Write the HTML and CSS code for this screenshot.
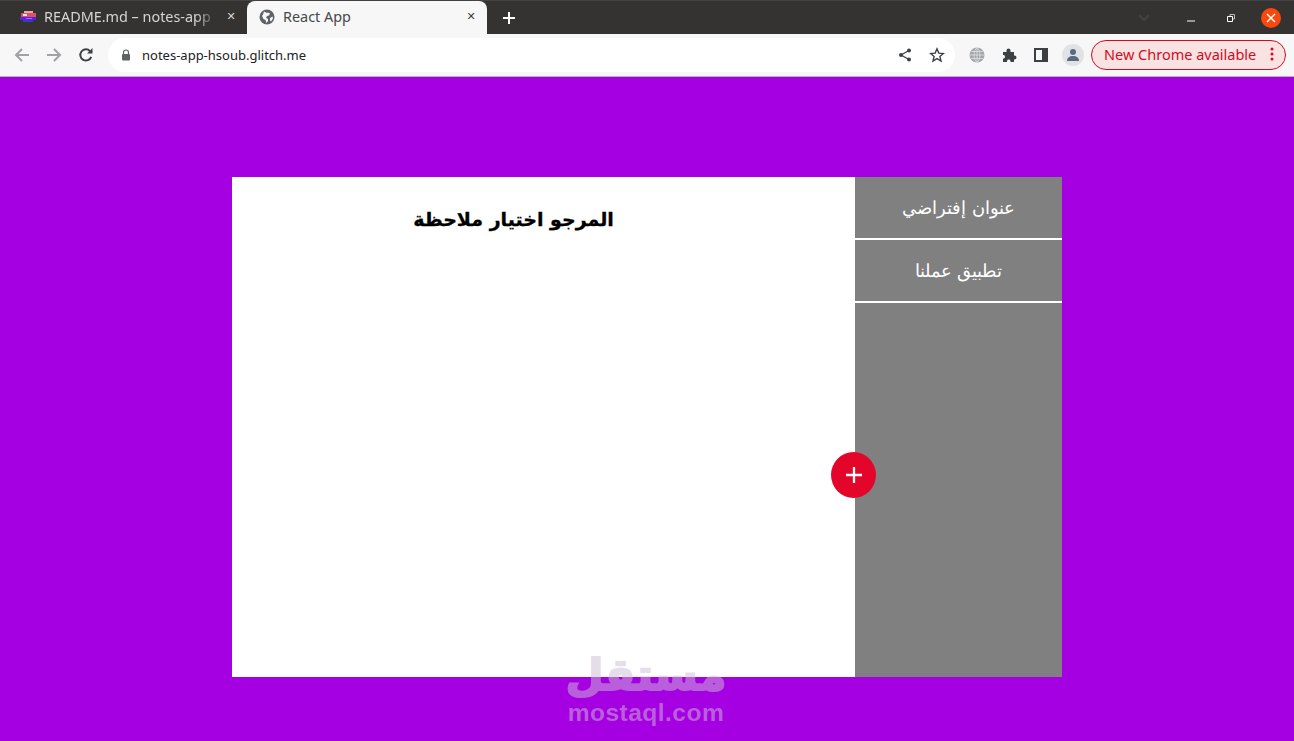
FILE: index.html
```html
<!DOCTYPE html>
<html lang="ar">
<head>
  <meta charset="UTF-8">
  <title>React App</title>
  <link rel="stylesheet" href="styles.css">
</head>
<body>
  <div class="tabbar">
    <div class="tab">
      <svg class="favicon" viewBox="0 0 16 16" width="16" height="16">
        <rect x="1" y="4" width="15" height="4" fill="#d9506a"/>
        <rect x="4" y="2" width="9" height="2" fill="#e8a9a0"/>
        <rect x="0" y="8" width="16" height="3" fill="#5a22e0"/>
        <rect x="3" y="11" width="10" height="2" fill="#3f35c8"/>
        <rect x="6" y="9" width="6" height="1" fill="#a070f0"/>
        <rect x="3" y="5" width="4" height="2" fill="#f3e6e6"/>
      </svg>
      <span class="tab-title fade">README.md – notes-app</span>
      <span class="tab-close">✕</span>
    </div>
    <div class="tab active">
      <svg class="favicon" viewBox="0 0 16 16" width="16" height="16">
        <circle cx="8" cy="8" r="7.500" fill="#5f6368"/>
        <path d="M5 2.500l3 1.500 1-.5 2 1-1 2-2 .5-1 2 2 1v2l-1.500 2-1-3-2-1-1.500-3 1-1.500z M11 9l2.500-1.500.5 2-2 3-1-1z" fill="#f7f7f7"/>
      </svg>
      <span class="tab-title">React App</span>
      <span class="tab-close">✕</span>
    </div>
    <svg class="new-tab" viewBox="0 0 14 14" width="14" height="14"><path d="M7 1v12M1 7h12" stroke="#fff" stroke-width="2"/></svg>
    <svg class="tab-search" viewBox="0 0 12 8" width="12" height="8"><path d="M1 1l5 5 5-5" fill="none" stroke="#45433f" stroke-width="2"/></svg>
    <div class="win-controls">
      <svg viewBox="0 0 10 10" width="10" height="10"><path d="M1 8h8" stroke="#fff" stroke-width="1"/></svg>
      <svg viewBox="0 0 10 10" width="10" height="10"><path d="M1.500 3.500h5v5h-5z" fill="none" stroke="#fff"/><path d="M4 3V1.500h4.500V6H7" fill="none" stroke="#bbb"/></svg>
      <span class="win-close">
        <svg viewBox="0 0 10 10" width="10" height="10"><path d="M1 1l8 8M9 1l-8 8" stroke="#fff" stroke-width="1.400"/></svg>
      </span>
    </div>
  </div>

  <div class="toolbar">
    <div class="nav-icons">
      <svg viewBox="0 0 16 16" width="16" height="16"><path d="M15 8H2M8 2L2 8l6 6" fill="none" stroke="#a0a2a5" stroke-width="2"/></svg>
      <svg viewBox="0 0 16 16" width="16" height="16"><path d="M1 8h13M8 2l6 6-6 6" fill="none" stroke="#a0a2a5" stroke-width="2"/></svg>
      <svg viewBox="0 0 16 16" width="16" height="16"><path d="M13.200 9.800A5.600 5.600 0 1 1 12 4.100" fill="none" stroke="#3c4043" stroke-width="2"/><path d="M9 6.500h5.500V1z" fill="#3c4043"/></svg>
    </div>
    <div class="omnibox">
      <svg viewBox="0 0 10 12" width="10" height="12"><path d="M2.500 5V3.500a2.500 2.500 0 0 1 5 0V5" fill="none" stroke="#5f6368" stroke-width="1.200"/><rect x="1" y="5" width="8" height="6.500" rx="1" fill="#5f6368"/></svg>
      <span class="url">notes-app-hsoub.glitch.me</span>
      <div class="omni-end">
        <svg viewBox="0 0 14 14" width="14" height="14"><path d="M11 2.500L3 7l8 4.500" fill="none" stroke="#3c4043" stroke-width="1.300"/><circle cx="11" cy="2.500" r="2" fill="#3c4043"/><circle cx="3" cy="7" r="2" fill="#3c4043"/><circle cx="11" cy="11.500" r="2" fill="#3c4043"/></svg>
        <svg viewBox="0 0 16 16" width="16" height="16"><path d="M8 1.800l1.800 4.300 4.600.4-3.500 3 1.100 4.500L8 11.600 4 14l1.100-4.500-3.500-3 4.600-.4z" fill="none" stroke="#3c4043" stroke-width="1.400"/></svg>
      </div>
    </div>
    <div class="ext-icons">
      <svg viewBox="0 0 16 16" width="16" height="16"><circle cx="8" cy="8" r="7.500" fill="#a3a5a8"/><path d="M0.500 8h15M2 4.500h12M2 11.500h12M8 .5v15M8 .5C4 4 4 12 8 15.500M8 .5c4 3.500 4 11.500 0 15" fill="none" stroke="#e8e8e8" stroke-width=".7"/></svg>
      <svg viewBox="0 0 16 16" width="16" height="16"><path d="M1 5h3.500V3.500a2 2 0 0 1 4 0V5H12v3.500h.5a2 2 0 0 1 0 4H12V15H8.500v-1a1.800 1.800 0 0 0-3.500 0v1H1v-3.500h1a2 2 0 0 0 0-3.500H1z" fill="#3c4043"/></svg>
      <svg viewBox="0 0 14 14" width="14" height="14"><rect x="1" y="1" width="12" height="12" fill="none" stroke="#3c4043" stroke-width="2"/><rect x="8" y="1" width="5" height="12" fill="#3c4043"/></svg>
      <span class="avatar">
        <svg viewBox="0 0 14 14" width="14" height="14"><circle cx="7" cy="4" r="3" fill="#5b6b7d"/><path d="M1 13c0-3.500 2.500-5 6-5s6 1.500 6 5z" fill="#5b6b7d"/></svg>
      </span>
    </div>
    <div class="update-pill">
      <span>New Chrome available</span>
      <svg viewBox="0 0 4 14" width="4" height="14"><circle cx="2" cy="2" r="1.500" fill="#d50b1c"/><circle cx="2" cy="7" r="1.500" fill="#d50b1c"/><circle cx="2" cy="12" r="1.500" fill="#d50b1c"/></svg>
    </div>
  </div>

  <main class="page">
    <div class="app" dir="rtl">
      <aside class="sidebar">
        <div class="note-item">عنوان إفتراضي</div>
        <div class="note-item">تطبيق عملنا</div>
      </aside>
      <section class="preview">
        <h2>المرجو اختيار ملاحظة</h2>
      </section>
      <button class="add-btn">
        <svg viewBox="0 0 14 14" width="16" height="16"><path d="M7 0v14M0 7h14" stroke="#fff" stroke-width="2"/></svg>
      </button>
    </div>
  </main>

  <div class="watermark">
    <div class="wm-ar">مستقل</div>
    <div class="wm-en">mostaql.com</div>
  </div>
</body>
</html>
```

FILE: styles.css
```css
* {
  box-sizing: border-box;
  margin: 0;
  padding: 0;
}

html, body {
  height: 100%;
  overflow: hidden;
}

body {
  font-family: "Noto Sans", sans-serif;
  display: flex;
  flex-direction: column;
  position: relative;
  background-color: #a500e2;
}

/* browser chrome */
.tabbar {
  height: 34px;
  flex-shrink: 0;
  display: flex;
  align-items: flex-end;
  padding-left: 8px;
  background-color: #353331;
  border-top: 1px solid #45433f;
}

.tab {
  width: 239px;
  height: 33px;
  display: flex;
  align-items: center;
  padding: 0 10px 2px 12px;
  gap: 8px;
  color: #d5d5d4;
  font-size: 14.400px;
}

.tab.active {
  width: 240px;
  background-color: #f7f7f7;
  color: #45474a;
  border-radius: 8px 8px 0 0;
}

.tab-title {
  flex: 1;
  overflow: hidden;
  white-space: nowrap;
}

.fade {
  -webkit-mask-image: linear-gradient(to right, #000 88%, transparent 100%);
  mask-image: linear-gradient(to right, #000 88%, transparent 100%);
}

.tab-close {
  font-size: 11px;
  width: 12px;
  text-align: center;
  font-family: "DejaVu Sans", sans-serif;
}

.active .tab-close {
  color: #3c4043;
}

.new-tab {
  align-self: center;
  margin-left: 15px;
}

.tab-search {
  align-self: center;
  margin-left: auto;
  margin-right: 36px;
}

.win-controls {
  align-self: center;
  display: flex;
  align-items: center;
  gap: 30px;
  padding-right: 13px;
}

.win-close {
  width: 20px;
  height: 20px;
  margin-left: -5px;
  border-radius: 50%;
  background-color: #f7490c;
  display: flex;
  align-items: center;
  justify-content: center;
}

.toolbar {
  height: 43px;
  flex-shrink: 0;
  display: flex;
  align-items: center;
  padding: 0 8px 1px 14px;
  background-color: #f7f7f7;
  border-bottom: 1px solid #b4b2b6;
}

.nav-icons {
  display: flex;
  gap: 16px;
  align-items: center;
  width: 94px;
}

.omnibox {
  width: 847px;
  height: 34px;
  border-radius: 17px;
  background-color: #fff;
  display: flex;
  align-items: center;
  padding: 0 10px 0 13px;
  gap: 11px;
}

.url {
  font-size: 13px;
  color: #202124;
}

.omni-end {
  margin-left: auto;
  display: flex;
  align-items: center;
  gap: 17px;
}

.ext-icons {
  display: flex;
  align-items: center;
  gap: 16px;
  margin-left: 14px;
}

.ext-icons svg:nth-child(2) {
  margin-left: 1px;
}

.avatar {
  width: 22px;
  height: 22px;
  border-radius: 50%;
  background-color: #e0e2e5;
  display: flex;
  align-items: center;
  justify-content: center;
  margin-left: -2px;
}

.update-pill {
  margin-left: 7px;
  width: 195px;
  height: 30px;
  border: 1px solid #d50b1c;
  border-radius: 15px;
  background-color: #f8e2e2;
  color: #d50b1c;
  font-size: 14.500px;
  line-height: 18px;
  display: flex;
  align-items: center;
  justify-content: space-between;
  padding: 0 11px 1px 12px;
}

/* notes app */
.page {
  flex: 1;
  padding: 100px 232px 64px;
}

.app {
  height: 500px;
  display: flex;
  position: relative;
  font-family: "DejaVu Sans", sans-serif;
}

.sidebar {
  width: 207px;
  flex-shrink: 0;
  background-color: #808080;
}

.note-item {
  height: 63px;
  line-height: 61px;
  border-bottom: 2px solid #fff;
  color: #fff;
  font-size: 18px;
  font-weight: 200;
  text-align: center;
}

.preview {
  flex: 1;
  background-color: #fff;
  padding: 24px 60px 0 0;
  text-align: center;
}

.preview h2 {
  font-size: 19px;
  line-height: 36px;
  color: #000;
  -webkit-text-stroke: 0.3px #000;
}

.add-btn {
  position: absolute;
  right: 186px;
  top: 275px;
  width: 45px;
  height: 46px;
  border: none;
  border-radius: 50%;
  background-color: #e3062a;
  display: flex;
  align-items: center;
  justify-content: center;
}

/* mostaql watermark */
.watermark {
  position: absolute;
  left: 546px;
  top: 650px;
  width: 200px;
  text-align: center;
  color: #cdbed7;
  opacity: 0.5;
  font-weight: bold;
}

.wm-ar {
  font-family: "DejaVu Sans", sans-serif;
  font-size: 44px;
  line-height: 50px;
  -webkit-text-stroke: 2px #cdbed7;
}

.wm-en {
  font-family: "Liberation Sans", sans-serif;
  font-size: 24.700px;
  line-height: 26px;
  letter-spacing: 0.4px;
}
```
